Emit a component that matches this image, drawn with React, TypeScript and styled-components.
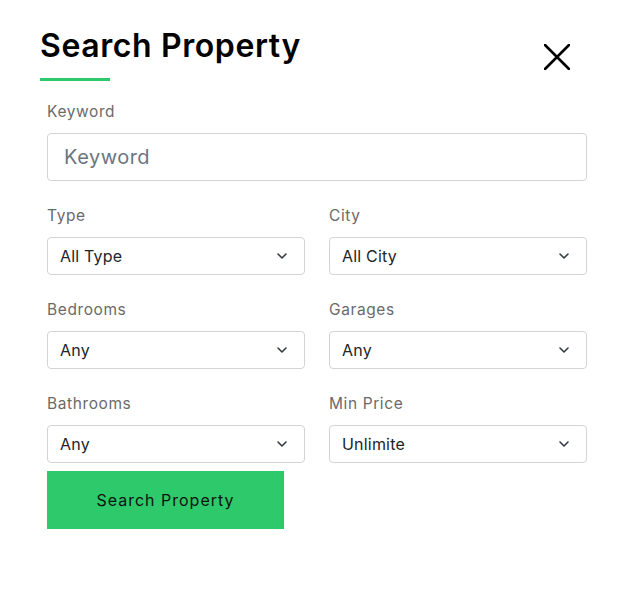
import React from "react";
import styled, { createGlobalStyle } from "styled-components";

const GlobalStyle = createGlobalStyle`
  body {
    margin: 0;
    background: #ffffff;
    font-family: "Inter", "Open Sans", sans-serif;
  }
`;

const fields = [
  [
    { label: "Type", value: "All Type" },
    { label: "City", value: "All City" },
  ],
  [
    { label: "Bedrooms", value: "Any" },
    { label: "Garages", value: "Any" },
  ],
  [
    { label: "Bathrooms", value: "Any" },
    { label: "Min Price", value: "Unlimite" },
  ],
];

const Chevron = () => (
  <svg width="12" height="8" viewBox="0 0 12 8" fill="none">
    <path d="M2 2l4 4 4-4" stroke="#343a40" strokeWidth="1.6" strokeLinecap="round" strokeLinejoin="round" />
  </svg>
);

const SelectBox: React.FC<{ value: string }> = ({ value }) => (
  <Select>
    <span>{value}</span>
    <Chevron />
  </Select>
);

const App: React.FC = () => {
  return (
    <>
      <GlobalStyle />
      <Panel>
        <Header>
          <TitleBlock>
            <Title>Search Property</Title>
            <Underline />
          </TitleBlock>
          <CloseButton aria-label="close">
            <svg width="26" height="26" viewBox="0 0 26 26" fill="none">
              <path d="M1 1l24 24M25 1L1 25" stroke="#000" strokeWidth="2.6" strokeLinecap="round" />
            </svg>
          </CloseButton>
        </Header>
        <Form>
          <Field>
            <Label>Keyword</Label>
            <Input placeholder="Keyword" />
          </Field>
          {fields.map((row, i) => (
            <Row key={i}>
              {row.map((f) => (
                <Field key={f.label}>
                  <Label>{f.label}</Label>
                  <SelectBox value={f.value} />
                </Field>
              ))}
            </Row>
          ))}
          <SubmitButton>Search Property</SubmitButton>
        </Form>
      </Panel>
    </>
  );
};

const Panel = styled.div`
  width: 637px;
  padding: 24px 0 0 40px;
  box-sizing: border-box;
`;

const Header = styled.div`
  display: flex;
  justify-content: space-between;
  align-items: flex-start;
  width: 530px;
`;

const TitleBlock = styled.div`
  display: flex;
  flex-direction: column;
`;

const Title = styled.h2`
  margin: 0;
  font-size: 32px;
  line-height: 44px;
  font-weight: 600;
  color: #000;
  letter-spacing: 0.6px;
`;

const Underline = styled.div`
  width: 70px;
  height: 3px;
  margin-top: 10px;
  background: #2ec96a;
`;

const CloseButton = styled.button`
  border: none;
  background: none;
  padding: 0;
  margin-top: 20px;
  cursor: pointer;
  display: flex;
`;

const Form = styled.div`
  width: 540px;
  margin-left: 7px;
  margin-top: 20px;
  display: flex;
  flex-direction: column;
`;

const Row = styled.div`
  display: grid;
  grid-template-columns: 1fr 1fr;
  column-gap: 24px;
  margin-top: 24px;
`;

const Field = styled.div`
  display: flex;
  flex-direction: column;
`;

const Label = styled.label`
  font-size: 15.5px;
  line-height: 22px;
  color: #6a6a6a;
  letter-spacing: 0.6px;
  margin-bottom: 10px;
`;

const Input = styled.input`
  height: 48px;
  box-sizing: border-box;
  border: 1px solid #d4d4d8;
  border-radius: 4px;
  padding: 0 16px;
  font-family: inherit;
  font-size: 20px;
  letter-spacing: 0.5px;
  outline: none;
  &::placeholder {
    color: #6c757d;
  }
`;

const Select = styled.div`
  height: 38px;
  box-sizing: border-box;
  border: 1px solid #d4d4d8;
  border-radius: 4px;
  padding: 0 16px 0 12px;
  display: flex;
  align-items: center;
  justify-content: space-between;
  font-size: 16px;
  letter-spacing: 0.2px;
  color: #212529;
`;

const SubmitButton = styled.button`
  margin-top: 8px;
  width: 237px;
  height: 58px;
  border: none;
  background: #2ec96a;
  color: #111;
  font-family: inherit;
  font-size: 16px;
  letter-spacing: 1px;
  cursor: pointer;
`;

export default App;
